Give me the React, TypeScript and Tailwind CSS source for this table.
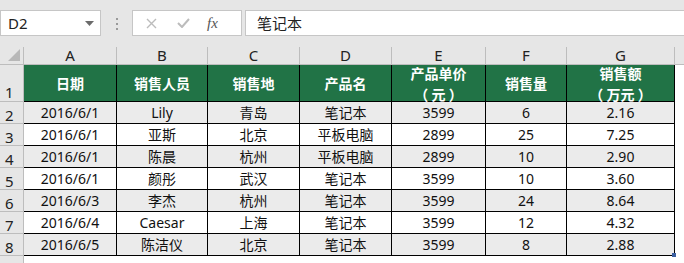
import React from "react";

const cols = [
  { key: "A", w: "w-[93px]" },
  { key: "B", w: "w-[91px]" },
  { key: "C", w: "w-[92px]" },
  { key: "D", w: "w-[92px]" },
  { key: "E", w: "w-[94px]" },
  { key: "F", w: "w-[81px]" },
  { key: "G", w: "w-[108px]" },
];

const rows = [
  ["2016/6/1", "Lily", "青岛", "笔记本", "3599", "6", "2.16"],
  ["2016/6/1", "亚斯", "北京", "平板电脑", "2899", "25", "7.25"],
  ["2016/6/1", "陈晨", "杭州", "平板电脑", "2899", "10", "2.90"],
  ["2016/6/1", "颜彤", "武汉", "笔记本", "3599", "10", "3.60"],
  ["2016/6/3", "李杰", "杭州", "笔记本", "3599", "24", "8.64"],
  ["2016/6/4", "Caesar", "上海", "笔记本", "3599", "12", "4.32"],
  ["2016/6/5", "陈洁仪", "北京", "笔记本", "3599", "8", "2.88"],
];

const headers: string[][] = [
  ["日期"],
  ["销售人员"],
  ["销售地"],
  ["产品名"],
  ["产品单价", "（元）"],
  ["销售量"],
  ["销售额", "（万元）"],
];

function FormulaBar() {
  return (
    <div className="flex h-[47px] items-start bg-[#e6e6e6] pt-[10px]">
      {/* name box */}
      <div className="relative flex h-[26px] w-[101px] items-center border border-[#c6c6c6] bg-white pl-[7px] text-[15px] text-[#222]">
        D2
        <svg className="absolute right-[6px] top-[10px]" width="9" height="5" viewBox="0 0 9 5">
          <path d="M0 0h9L4.5 5z" fill="#6b6b6b" />
        </svg>
      </div>
      {/* dots */}
      <div className="flex w-[31px] flex-col items-center gap-[3px] pt-[8px]">
        <span className="h-[2px] w-[2px] bg-[#9a9a9a]" />
        <span className="h-[2px] w-[2px] bg-[#9a9a9a]" />
        <span className="h-[2px] w-[2px] bg-[#9a9a9a]" />
      </div>
      {/* cancel / enter / fx */}
      <div className="flex h-[26px] w-[110px] items-center border border-[#c6c6c6] bg-white">
        <svg className="ml-[13px]" width="11" height="11" viewBox="0 0 11 11">
          <path d="M1 1l9 9M10 1l-9 9" stroke="#bcbcbc" strokeWidth="1.4" />
        </svg>
        <svg className="ml-[20px]" width="13" height="10" viewBox="0 0 13 10">
          <path d="M1 5l4 4 7-8" stroke="#bcbcbc" strokeWidth="2" fill="none" />
        </svg>
        <span className="ml-[17px] font-['Liberation_Serif',serif] text-[15px] italic text-[#555]">
          fx
        </span>
      </div>
      {/* formula input */}
      <div className="ml-[3px] flex h-[26px] flex-1 items-center border-y border-l border-[#c6c6c6] bg-white pl-[11px] text-[15px] text-[#222]">
        笔记本
      </div>
    </div>
  );
}

export default function App() {
  return (
    <div className="relative h-[263px] w-[684px] overflow-hidden bg-white font-['Noto_Sans','Noto_Sans_CJK_SC',sans-serif] text-[#111]">
      <FormulaBar />

      {/* column header row */}
      <div className="flex h-[18px] bg-[#e6e6e6]">
        <div className="relative w-[24px] border-r border-b border-[#bdbdbd]">
          <svg className="absolute bottom-[3px] right-[3px]" width="12" height="12" viewBox="0 0 12 12">
            <path d="M12 0v12H0z" fill="#b8b8b8" />
          </svg>
        </div>
        {cols.map((c) => (
          <div
            key={c.key}
            className={`${c.w} flex items-center justify-center border-r border-b border-[#bdbdbd] pb-[1px] text-[15px] leading-none text-[#222]`}
          >
            {c.key}
          </div>
        ))}
        <div className="flex-1 border-b border-[#bdbdbd]" />
      </div>

      {/* header row 1 */}
      <div className="flex h-[37px]">
        <div className="flex w-[24px] items-end border-r border-b border-[#bdbdbd] bg-[#e6e6e6] pb-[1px] pl-[5px] text-[15px] leading-none text-[#222]">
          1
        </div>
        {cols.map((c, i) => (
          <div
            key={c.key}
            className={`${c.w} flex flex-col items-center justify-center gap-[7px] border-r border-b border-black bg-[#217346] font-['Noto_Sans_CJK_SC',sans-serif] text-[14px] font-bold leading-[14px] text-white`}
          >
            {headers[i].map((t) => (
              <span key={t} className="whitespace-pre">
                {t.startsWith("（") ? t.replace("（", "（ ").replace("）", " ）") : t}
              </span>
            ))}
          </div>
        ))}
        <div className="flex-1" />
      </div>

      {/* data rows */}
      {rows.map((r, ri) => (
        <div key={ri} className="flex h-[22px]">
          <div className="flex w-[24px] items-end border-r border-b border-[#bdbdbd] bg-[#e6e6e6] pl-[5px] text-[15px] leading-none text-[#222]">
            {ri + 2}
          </div>
          {cols.map((c, ci) => (
            <div
              key={c.key}
              className={`${c.w} flex items-center justify-center border-r border-b border-black text-[14px] leading-none ${
                ri % 2 === 0 ? "bg-[#ebebeb]" : "bg-white"
              }`}
            >
              {r[ci]}
            </div>
          ))}
          <div className="flex-1" />
        </div>
      ))}

      {/* row 9 */}
      <div className="flex h-[7px]">
        <div className="w-[24px] border-r border-[#bdbdbd] bg-[#e6e6e6]" />
      </div>

      {/* fill handle */}
      <div className="absolute left-[672px] top-[253px] h-[4px] w-[4px] bg-[#3a5fa0]" />
    </div>
  );
}
